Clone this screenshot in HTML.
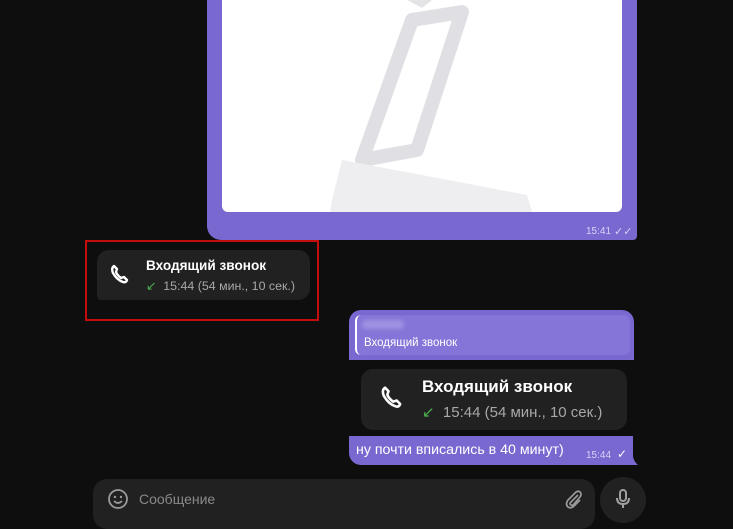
<!DOCTYPE html><html><head><meta charset="utf-8"><style>
body{margin:0;width:733px;height:512px;background:#0e0e0e;overflow:hidden;position:relative;font-family:"Liberation Sans",sans-serif;}
.a{position:absolute}
.call{background:#212121;border-radius:12px;color:#fff}
.p{background:#7868cf}
</style></head><body>
<div class="a p" style="left:207px;top:-10px;width:430px;height:250px;border-radius:0 0 4px 14px"></div>
<svg class="a" style="left:628px;top:226px" width="14" height="14"><path d="M0 0 L9 0 Q4 4 8 13 L0 14Z" fill="#7868cf"/></svg>
<div class="a" style="left:222px;top:0;width:400px;height:212px;background:#fff;border-radius:0 0 6px 6px;overflow:hidden">
<svg width="400" height="212"><g fill="none" stroke="#e0e0e4" stroke-width="14" stroke-linejoin="round"><path d="M140 160 L190 20 L240 12 L195 150Z"/></g><path d="M110 200 L120 160 L200 175 L305 195 L310 212 L108 212Z" fill="#eeeef0"/><path d="M185 0 L210 0 L200 8Z" fill="#e4e4e6"/></svg></div>
<div class="a" style="left:586px;top:226px;font-size:10px;color:#d8d2f5">15:41</div>
<div class="a" style="left:614px;top:225px;font-size:11px;color:#d8d2f5">✓✓</div>

<div class="a" style="left:85px;top:240px;width:230px;height:77px;border:2px solid #c50d0d"></div>
<div class="a call" style="left:97px;top:250px;width:213px;height:50px;border-radius:12px 12px 12px 4px"></div>
<svg class="a" style="left:108px;top:262px" width="24" height="24" viewBox="0 0 24 24"><path d="M6 4 Q3 6 5 11 Q9 18 15 20 Q18 21 19 18 L16 15 L13 16 Q9 13 8 10 L9 7Z" fill="none" stroke="#fff" stroke-width="2.4" stroke-linejoin="round"/></svg>
<div class="a" style="left:146px;top:258px;font-size:13.6px;font-weight:bold;color:#fff">Входящий звонок</div>
<div class="a" style="left:146px;top:278px;font-size:12.4px;color:#a8a8a8"><span style="color:#4caf50">↙</span>&nbsp; 15:44 (54 мин., 10 сек.)</div>

<div class="a p" style="left:349px;top:310px;width:285px;height:50px;border-radius:12px 12px 0 0"></div>
<div class="a" style="left:355px;top:315px;width:273px;height:40px;background:#8575d8;border-radius:6px;border-left:2px solid #fff"></div>
<div class="a" style="left:362px;top:320px;width:42px;height:9px;background:#9f92e3;border-radius:4px;filter:blur(2px)"></div>
<div class="a" style="left:364px;top:337px;font-size:11.5px;color:#fff">Входящий звонок</div>
<div class="a call" style="left:361px;top:369px;width:266px;height:61px"></div>
<svg class="a" style="left:378px;top:383px" width="28" height="28" viewBox="0 0 24 24"><path d="M6 4 Q3 6 5 11 Q9 18 15 20 Q18 21 19 18 L16 15 L13 16 Q9 13 8 10 L9 7Z" fill="none" stroke="#fff" stroke-width="2.2" stroke-linejoin="round"/></svg>
<div class="a" style="left:422px;top:377px;font-size:17px;font-weight:bold;color:#fff">Входящий звонок</div>
<div class="a" style="left:422px;top:403px;font-size:15px;color:#a8a8a8"><span style="color:#4caf50">↙</span>&nbsp; 15:44 (54 мин., 10 сек.)</div>
<div class="a p" style="left:349px;top:436px;width:284px;height:29px;border-radius:0 0 4px 12px"></div>
<svg class="a" style="left:628px;top:452px" width="12" height="14"><path d="M0 0 L5 0 Q4 8 10 13 L0 13Z" fill="#7868cf"/></svg>
<div class="a" style="left:356px;top:442px;font-size:14.2px;color:#fff">ну почти вписались в 40 минут)</div>
<div class="a" style="left:586px;top:450px;font-size:10px;color:#d8d2f5">15:44</div>
<div class="a" style="left:617px;top:447px;font-size:12px;color:#fff">✓</div>

<div class="a" style="left:93px;top:479px;width:502px;height:50px;background:#212121;border-radius:14px"></div>
<svg class="a" style="left:107px;top:488px" width="22" height="22" viewBox="0 0 22 22"><circle cx="11" cy="11" r="9" fill="none" stroke="#9a9a9a" stroke-width="1.8"/><circle cx="8" cy="9" r="1.2" fill="#9a9a9a"/><circle cx="14" cy="9" r="1.2" fill="#9a9a9a"/><path d="M7 13 Q11 17 15 13" fill="none" stroke="#9a9a9a" stroke-width="1.6"/></svg>
<div class="a" style="left:139px;top:491px;font-size:14px;color:#8a8a8a">Сообщение</div>
<svg class="a" style="left:563px;top:488px" width="22" height="22" viewBox="0 0 22 22"><path d="M15 7 L8 14 Q6 16 8 17 Q10 18 11 16 L17 9 Q19 6 17 4 Q15 2 12 5 L5 12 Q2 16 5 19 Q8 21 11 18 L17 12" fill="none" stroke="#9a9a9a" stroke-width="1.7"/></svg>
<div class="a" style="left:600px;top:477px;width:46px;height:46px;border-radius:50%;background:#212121"></div>
<svg class="a" style="left:611px;top:487px" width="24" height="24" viewBox="0 0 24 24"><rect x="9" y="3" width="6" height="11" rx="3" fill="none" stroke="#a0a0a0" stroke-width="2"/><path d="M6 11 Q6 17 12 17 Q18 17 18 11 M12 17 V21" fill="none" stroke="#a0a0a0" stroke-width="2"/></svg>
</body></html>
